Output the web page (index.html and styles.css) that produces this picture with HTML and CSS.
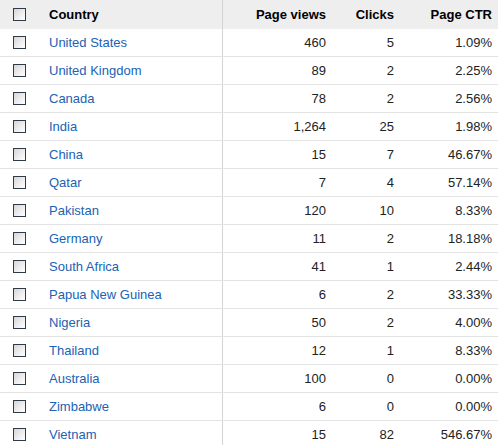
FILE: index.html
```html
<!DOCTYPE html>
<html>
<head>
<meta charset="utf-8">
<link rel="stylesheet" href="styles.css">
</head>
<body>
<div class="report">
  <div class="row head">
    <div class="cell chk"><span class="box"></span></div>
    <div class="cell country">Country</div>
    <div class="cell num views">Page views</div>
    <div class="cell num clicks">Clicks</div>
    <div class="cell num ctr">Page CTR</div>
  </div>
  <div class="row"><div class="cell chk"><span class="box"></span></div><div class="cell country"><a href="#">United States</a></div><div class="cell num views">460</div><div class="cell num clicks">5</div><div class="cell num ctr">1.09%</div></div>
  <div class="row"><div class="cell chk"><span class="box"></span></div><div class="cell country"><a href="#">United Kingdom</a></div><div class="cell num views">89</div><div class="cell num clicks">2</div><div class="cell num ctr">2.25%</div></div>
  <div class="row"><div class="cell chk"><span class="box"></span></div><div class="cell country"><a href="#">Canada</a></div><div class="cell num views">78</div><div class="cell num clicks">2</div><div class="cell num ctr">2.56%</div></div>
  <div class="row"><div class="cell chk"><span class="box"></span></div><div class="cell country"><a href="#">India</a></div><div class="cell num views">1,264</div><div class="cell num clicks">25</div><div class="cell num ctr">1.98%</div></div>
  <div class="row"><div class="cell chk"><span class="box"></span></div><div class="cell country"><a href="#">China</a></div><div class="cell num views">15</div><div class="cell num clicks">7</div><div class="cell num ctr">46.67%</div></div>
  <div class="row"><div class="cell chk"><span class="box"></span></div><div class="cell country"><a href="#">Qatar</a></div><div class="cell num views">7</div><div class="cell num clicks">4</div><div class="cell num ctr">57.14%</div></div>
  <div class="row"><div class="cell chk"><span class="box"></span></div><div class="cell country"><a href="#">Pakistan</a></div><div class="cell num views">120</div><div class="cell num clicks">10</div><div class="cell num ctr">8.33%</div></div>
  <div class="row"><div class="cell chk"><span class="box"></span></div><div class="cell country"><a href="#">Germany</a></div><div class="cell num views">11</div><div class="cell num clicks">2</div><div class="cell num ctr">18.18%</div></div>
  <div class="row"><div class="cell chk"><span class="box"></span></div><div class="cell country"><a href="#">South Africa</a></div><div class="cell num views">41</div><div class="cell num clicks">1</div><div class="cell num ctr">2.44%</div></div>
  <div class="row"><div class="cell chk"><span class="box"></span></div><div class="cell country"><a href="#">Papua New Guinea</a></div><div class="cell num views">6</div><div class="cell num clicks">2</div><div class="cell num ctr">33.33%</div></div>
  <div class="row"><div class="cell chk"><span class="box"></span></div><div class="cell country"><a href="#">Nigeria</a></div><div class="cell num views">50</div><div class="cell num clicks">2</div><div class="cell num ctr">4.00%</div></div>
  <div class="row"><div class="cell chk"><span class="box"></span></div><div class="cell country"><a href="#">Thailand</a></div><div class="cell num views">12</div><div class="cell num clicks">1</div><div class="cell num ctr">8.33%</div></div>
  <div class="row"><div class="cell chk"><span class="box"></span></div><div class="cell country"><a href="#">Australia</a></div><div class="cell num views">100</div><div class="cell num clicks">0</div><div class="cell num ctr">0.00%</div></div>
  <div class="row"><div class="cell chk"><span class="box"></span></div><div class="cell country"><a href="#">Zimbabwe</a></div><div class="cell num views">6</div><div class="cell num clicks">0</div><div class="cell num ctr">0.00%</div></div>
  <div class="row"><div class="cell chk"><span class="box"></span></div><div class="cell country"><a href="#">Vietnam</a></div><div class="cell num views">15</div><div class="cell num clicks">82</div><div class="cell num ctr">546.67%</div></div>
</div>
</body>
</html>
```
FILE: styles.css
```css
html, body {
  margin: 0;
  padding: 0;
  background: #ffffff;
  overflow: hidden;
}
.report {
  width: 498px;
  font-family: "Liberation Sans", Arial, sans-serif;
  font-size: 13px;
  color: #222222;
}
.row {
  display: grid;
  grid-template-columns: 40px 183px 111px 68px 96px;
  height: 27px;
  border-bottom: 1px solid #e3e3e3;
  align-items: stretch;
}
.row.head {
  height: 29px;
  border-bottom: none;
  background: #eeeeee;
  font-weight: bold;
  color: #000000;
}
.cell {
  display: flex;
  align-items: center;
  box-sizing: border-box;
  white-space: nowrap;
}
.chk {
  padding-left: 13px;
}
.box {
  display: block;
  width: 13px;
  height: 13px;
  box-sizing: border-box;
  border: 1px solid #2f3b49;
  background: linear-gradient(135deg, #d6d6d6 0%, #f4f4f4 70%, #ffffff 100%);
}
.country {
  padding-left: 9px;
  border-right: 1px solid #d4d4d4;
}
.country a {
  color: #2062b4;
  text-decoration: none;
}
.num {
  justify-content: flex-end;
  padding-right: 8px;
}
.ctr {
  padding-right: 6px;
}
```
